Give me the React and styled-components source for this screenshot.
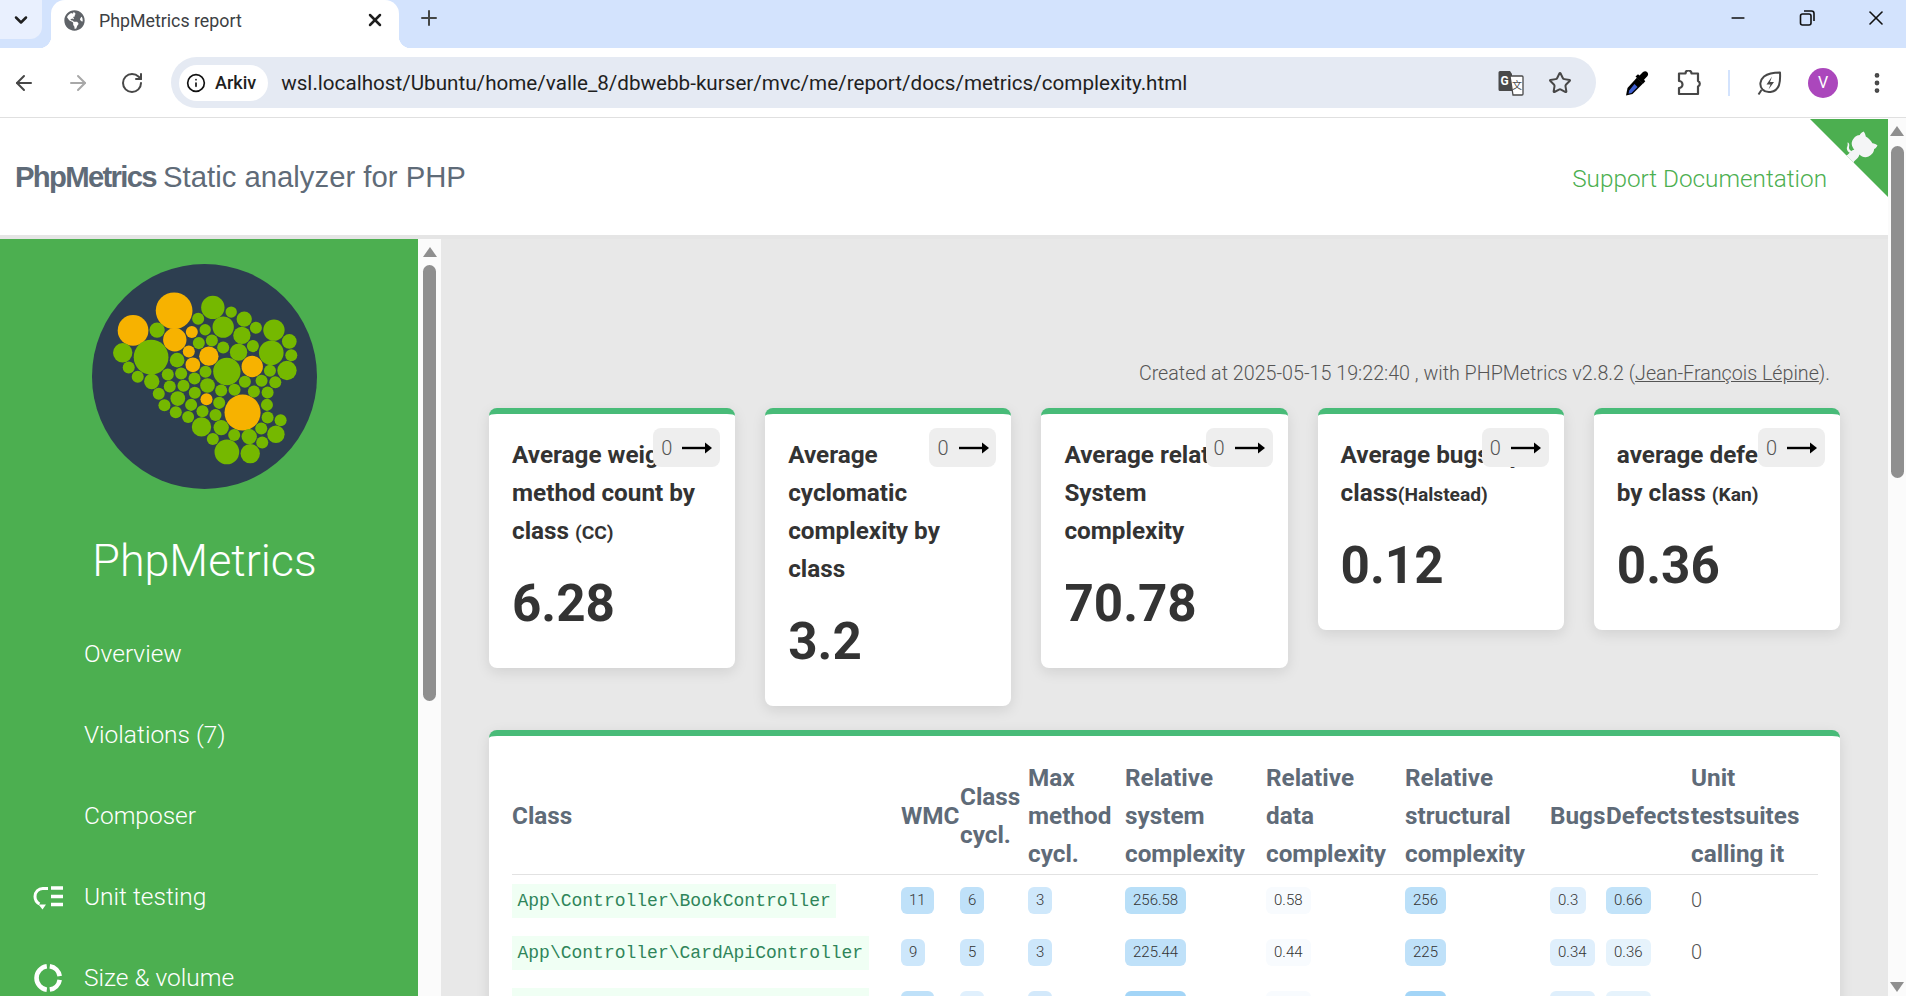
import React from 'react'
import styled, { createGlobalStyle } from 'styled-components'
import { ArrowLeft, ArrowRight, RotateCw, Info, Star, X, Plus, ChevronDown, Minus, MoreVertical } from 'lucide-react'
import { FaGlobeAmericas } from 'react-icons/fa'

const GlobalStyle = createGlobalStyle`
  html, body {
    margin: 0;
    height: 100%;
    overflow: hidden;
    font-family: Roboto, "Open Sans", sans-serif;
    background: #fff;
  }
`;

const Frame = styled.div`
  height: 100vh;
  display: flex;
  flex-direction: column;
  overflow: hidden;
`;

/* browser chrome */
const TabStrip = styled.div`
  height: 48px;
  flex: none;
  background: #d3e3fd;
  display: flex;
  align-items: flex-start;
`;

const TabMenu = styled.div`
  width: 42px;
  height: 39px;
  background: #e9f0fe;
  border-radius: 0 0 12px 0;
  display: flex;
  align-items: center;
  justify-content: center;
  color: #1f1f1f;
`;

const Tab = styled.div`
  position: relative;
  width: 348px;
  height: 48px;
  margin-left: 9px;
  background: #fff;
  border-radius: 14px 14px 0 0;
  display: flex;
  align-items: center;
  padding: 0 14px 8px 13px;
  box-sizing: border-box;
  color: #5f6368;
  &::before, &::after {
    content: '';
    position: absolute;
    bottom: 0;
    width: 12px;
    height: 12px;
  }
  &::before {
    left: -12px;
    background: radial-gradient(circle at 0 0, transparent 12px, #fff 12.5px);
  }
  &::after {
    right: -12px;
    background: radial-gradient(circle at 100% 0, transparent 12px, #fff 12.5px);
  }
`;

const TabTitle = styled.span`
  flex: 1;
  margin-left: 14px;
  font-size: 17.8px;
  color: #3c4043;
`;

const NewTab = styled.div`
  margin: 6px 0 0 18px;
  height: 24px;
  color: #444746;
`;

const WindowControls = styled.div`
  margin-left: auto;
  padding-right: 10px;
  display: flex;
  gap: 29px;
`;

const WindowButton = styled.div`
  width: 40px;
  height: 36px;
  display: flex;
  align-items: center;
  justify-content: center;
  color: #111;
`;

const Toolbar = styled.div`
  height: 69px;
  flex: none;
  background: #fff;
  border-bottom: 1px solid #e0e0e0;
  border-radius: 0 10px 0 0;
  display: flex;
  align-items: center;
  padding-left: 12px;
  box-sizing: content-box;
`;

const NavButton = styled.div`
  width: 24px;
  height: 24px;
  margin-right: 30px;
  color: ${({ $off }) => ($off ? '#a8a8a8' : '#474747')};
`;

const Omnibox = styled.div`
  width: 1425px;
  height: 51px;
  margin-left: -3px;
  flex: none;
  box-sizing: border-box;
  background: #e5eaf3;
  border-radius: 26px;
  display: flex;
  align-items: center;
  padding: 0 24px 0 8px;
`;

const SiteChip = styled.div`
  height: 36px;
  border-radius: 18px;
  background: #fff;
  display: flex;
  align-items: center;
  gap: 9px;
  padding: 0 12px 0 7px;
  font-size: 18px;
  font-weight: 500;
  color: #1f1f1f;
`;

const Url = styled.div`
  flex: 1;
  margin-left: 13px;
  font-size: 20.65px;
  color: #1f1f1f;
  white-space: nowrap;
`;

const OmniIcons = styled.div`
  display: flex;
  align-items: center;
  gap: 24px;
  color: #474747;
`;

const Extensions = styled.div`
  margin-left: 28px;
  display: flex;
  align-items: center;
  gap: 26px;
  color: #474747;
`;

const ToolDivider = styled.div`
  width: 2px;
  height: 26px;
  background: #d3e3fd;
`;

const Avatar = styled.div`
  width: 30px;
  height: 30px;
  border-radius: 50%;
  background: #ab47bc;
  color: #fff;
  font-size: 16px;
  display: flex;
  align-items: center;
  justify-content: center;
`;

/* page */
const Viewport = styled.div`
  flex: 1;
  min-height: 0;
  display: flex;
`;

const PageColumn = styled.div`
  position: relative;
  flex: 1;
  min-width: 0;
  display: flex;
  flex-direction: column;
`;

const Header = styled.header`
  height: 117px;
  flex: none;
  background: #fff;
  border-bottom: 4px solid #e5e5e5;
  display: flex;
  align-items: center;
  justify-content: space-between;
  padding: 0 61px 0 15px;
`;

const Brand = styled.div`
  font-family: "Liberation Sans", Arial, sans-serif;
  font-size: 29.3px;
  color: #5f6b78;
  strong {
    letter-spacing: -1.7px;
    margin-right: -1px;
  }
`;

const HeaderLinks = styled.div`
  font-size: 24.3px;
  font-weight: 300;
  color: #4caf50;
  padding-top: 3px;
`;

const Corner = styled.svg`
  position: absolute;
  top: 1px;
  right: 0;
  width: 78px;
  height: 78px;
`;

const Body = styled.div`
  flex: 1;
  min-height: 0;
  display: flex;
`;

const Sidebar = styled.aside`
  width: 418px;
  flex: none;
  background: #4caf50;
  color: #fff;
  overflow: hidden;
  padding-top: 25px;
  box-sizing: border-box;
`;

const Logo = styled.svg`
  display: block;
  width: 225px;
  height: 225px;
  margin: 0 0 0 92px;
`;

const SideTitle = styled.div`
  width: 409px;
  margin-top: 33px;
  text-align: center;
  font-size: 44.8px;
  font-weight: 300;
  line-height: 77px;
`;

const Nav = styled.nav`
  margin-top: 14px;
`;

const NavItem = styled.div`
  height: 81px;
  display: flex;
  align-items: center;
  gap: 21px;
  padding-left: 33px;
  font-size: 24.5px;
  font-weight: 300;
`;

const NavIcon = styled.span`
  width: 30px;
  height: 30px;
  display: block;
  flex: none;
`;

const ScrollTrack = styled.div`
  width: ${({ $w }) => $w}px;
  flex: none;
  background: #fbfbfb;
  display: flex;
  flex-direction: column;
  align-items: center;
  position: relative;
`;

const ScrollUp = styled.div`
  margin-top: ${({ $top }) => $top}px;
  width: 0;
  height: 0;
  border-left: 7px solid transparent;
  border-right: 7px solid transparent;
  border-bottom: 10px solid #8f8f8f;
`;

const ScrollThumb = styled.div`
  width: ${({ $w }) => $w}px;
  height: ${({ $h }) => $h}px;
  margin-top: ${({ $gap }) => $gap}px;
  background: #8f8f8f;
  border-radius: 7px;
`;

const ScrollDown = styled.div`
  margin-top: auto;
  margin-bottom: 4px;
  width: 0;
  height: 0;
  border-left: 7px solid transparent;
  border-right: 7px solid transparent;
  border-top: 10px solid #8f8f8f;
`;

const Main = styled.main`
  flex: 1;
  min-width: 0;
  background: #e8e8e8;
  padding: 120px 48px 0;
  overflow: hidden;
  box-sizing: border-box;
`;

const Created = styled.div`
  height: 30px;
  line-height: 30px;
  margin-bottom: 19px;
  padding-right: 10px;
  text-align: right;
  font-size: 19.7px;
  font-weight: 300;
  color: #555;
  a {
    color: #555;
    text-decoration: underline;
  }
`;

const CardRow = styled.div`
  display: flex;
  align-items: flex-start;
  gap: 30px;
`;

const Card = styled.div`
  position: relative;
  flex: 1;
  min-width: 0;
  box-sizing: border-box;
  background: #fff;
  border-top: 6px solid #48bb78;
  border-radius: 8px;
  padding: 22px 23px 26px;
  box-shadow: 0 4px 14px rgba(0, 0, 0, 0.1);
`;

const CardTitle = styled.div`
  font-size: 24.3px;
  line-height: 38px;
  font-weight: 700;
  color: #333;
  small {
    font-size: 19.2px;
    font-weight: 700;
    line-height: 0;
  }
`;

const CardValue = styled.div`
  margin-top: 15px;
  font-size: 51.2px;
  line-height: 77px;
  font-weight: 700;
  color: #333;
`;

const Trend = styled.div`
  position: absolute;
  top: 14px;
  right: 15px;
  width: 67px;
  height: 39px;
  box-sizing: border-box;
  background: #eee;
  border-radius: 8px;
  display: flex;
  align-items: center;
  gap: 10px;
  padding: 0 0 0 8px;
  font-size: 20px;
  font-weight: 300;
  color: #555;
`;

const TableCard = styled.div`
  margin-top: 24px;
  background: #fff;
  border-top: 6px solid #48bb78;
  border-radius: 8px;
  padding: 22px 22px 22px 23px;
  box-shadow: 0 4px 14px rgba(0, 0, 0, 0.1);
`;

const Table = styled.table`
  width: 100%;
  table-layout: fixed;
  border-collapse: collapse;
`;

const Col = styled.col`
  width: ${({ $w }) => $w}px;
`;

const Th = styled.th`
  padding: 0;
  font-size: 24.3px;
  line-height: 38px;
  font-weight: 700;
  color: #5f6b78;
  text-align: left;
  vertical-align: middle;
  border-bottom: 1px solid #e2e2e2;
  height: 116px;
  white-space: pre-line;
`;

const Td = styled.td`
  padding: 0;
  height: 52px;
  vertical-align: middle;
`;

const ClassName = styled.code`
  display: inline-block;
  vertical-align: middle;
  font-family: "Liberation Mono", monospace;
  font-size: 18px;
  line-height: 34px;
  padding: 0 5.5px;
  color: #2f855a;
  background: #f0fff4;
`;

const Metric = styled.span`
  display: inline-block;
  vertical-align: middle;
  height: 27px;
  line-height: 27px;
  margin-bottom: 2px;
  padding: 0 8px;
  border-radius: 6px;
  font-size: 15px;
  font-weight: 300;
  color: #333;
  background: ${({ $bg }) => $bg};
`;

const Plain = styled.span`
  display: inline-block;
  vertical-align: middle;
  line-height: 26px;
  margin-bottom: 2px;
  font-size: 20px;
  font-weight: 300;
  color: #555;
`;

const orange = [
  [343, 213, 55], [220, 272, 46], [345, 300, 35], [396, 277, 18], [387, 335, 18],
  [447, 349, 29], [399, 375, 22], [577, 380, 32], [440, 478, 18], [548, 518, 54],
];

const green = [
  [459, 203, 35], [514, 217, 17], [415, 237, 18], [553, 238, 23], [588, 264, 18], [642, 271, 32],
  [292, 271, 23], [436, 270, 17], [490, 262, 32], [546, 287, 26], [688, 305, 22], [417, 310, 18],
  [456, 302, 18], [490, 323, 18], [536, 337, 26], [579, 319, 18], [634, 339, 37], [694, 346, 18],
  [189, 339, 29], [274, 352, 52], [352, 361, 22], [207, 383, 18], [234, 411, 18], [276, 425, 23],
  [324, 404, 18], [364, 401, 18], [404, 416, 18], [437, 396, 18], [501, 395, 41], [681, 392, 29],
  [630, 393, 18], [555, 426, 18], [605, 423, 18], [646, 427, 18], [330, 440, 18], [371, 438, 18],
  [443, 437, 22], [484, 452, 18], [524, 450, 18], [582, 455, 18], [623, 458, 18], [297, 462, 18],
  [405, 459, 18], [354, 476, 22], [478, 489, 18], [314, 496, 18], [394, 495, 18], [621, 495, 18],
  [348, 517, 18], [428, 514, 18], [467, 525, 18], [385, 531, 18], [623, 533, 18], [662, 541, 18],
  [425, 561, 29], [484, 563, 23], [604, 566, 18], [523, 585, 18], [568, 590, 23], [648, 583, 26],
  [459, 597, 18], [607, 608, 18], [501, 636, 37], [571, 641, 29],
];

const cards = [
  { title: <>Average weighted method count by class <small>(CC)</small></>, value: '6.28' },
  { title: 'Average cyclomatic complexity by class', value: '3.2' },
  { title: 'Average relative System complexity', value: '70.78' },
  { title: <>Average bugs by class<small>(Halstead)</small></>, value: '0.12' },
  { title: <>average defects by class <small>(Kan)</small></>, value: '0.36' },
];

const columns = [
  ['Class', 389], ['WMC', 59], ['Class\ncycl.', 68], ['Max\nmethod\ncycl.', 97],
  ['Relative\nsystem\ncomplexity', 141], ['Relative\ndata\ncomplexity', 139],
  ['Relative\nstructural\ncomplexity', 145], ['Bugs', 56], ['Defects', 85],
  ['Unit\ntestsuites\ncalling it', 127],
];

const rows = [
  {
    name: 'App\\Controller\\BookController',
    metrics: [['11', '#bfe1f9'], ['6', '#bfe1f9'], ['3', '#cfe8fb'], ['256.58', '#b8dff8'], ['0.58', '#f8fbfe'], ['256', '#bbe0f9'], ['0.3', '#dfeffc'], ['0.66', '#c2e3f9']],
  },
  {
    name: 'App\\Controller\\CardApiController',
    metrics: [['9', '#cde7fb'], ['5', '#cde7fb'], ['3', '#cde7fb'], ['225.44', '#bfe1f9'], ['0.44', '#f8fbfe'], ['225', '#bfe1f9'], ['0.34', '#dfeffc'], ['0.36', '#e6f3fc']],
  },
  {
    name: 'App\\Controller\\GameApiController',
    metrics: [['11', '#bfe1f9'], ['4', '#e0f0fd'], ['3', '#d3e9fb'], ['361.11', '#a3d5f7'], ['0.11', '#f8fbfe'], ['361', '#a3d5f7'], ['0.31', '#dfeffc'], ['0.36', '#e6f3fc']],
  },
];

const TestingIcon = () => (
  <svg viewBox="0 0 30 30" width="30" height="30" fill="none" stroke="#fff">
    <path d="M15 6.500H10A7.800 7.800 0 0 0 2 14.500c0 3.300 1.800 6 4.500 7.500" strokeWidth="3" />
    <path d="M5.500 22.500h7.500l-3.500 5z" fill="#fff" stroke="none" />
    <path d="M18 6h12M18 14.500h12M18 22.500h12" strokeWidth="3.400" />
  </svg>
);

const VolumeIcon = () => (
  <svg viewBox="0 0 30 30" width="30" height="30" fill="none" stroke="#fff" strokeWidth="4.600">
    <path d="M13.800 3.300A11.800 11.800 0 0 0 13.800 26.700" />
    <path d="M16.800 26.600a11.800 11.800 0 0 0 9.900-9.800" />
    <path d="M26.700 13.200a11.800 11.800 0 0 0-9.900-9.900" />
  </svg>
);

const RestoreIcon = () => (
  <svg viewBox="0 0 18 18" width="18" height="18" fill="none" stroke="#111" strokeWidth="1.6">
    <rect x="2.5" y="5" width="10.5" height="11" rx="2" />
    <path d="M6 2h7.5a2.5 2.5 0 0 1 2.5 2.5V12" />
  </svg>
);

const TranslateIcon = () => (
  <svg viewBox="0 0 26 26" width="26" height="26">
    <path d="M2 1h10l2 3v17H2a1.500 1.500 0 0 1-1.500-1.500V2.500A1.500 1.500 0 0 1 2 1z" fill="#4a4a4a" />
    <path d="M12 6h12a1 1 0 0 1 1 1v17a1 1 0 0 1-1 1H15z" fill="#fff" stroke="#4a4a4a" strokeWidth="1.3" />
    <text x="2.500" y="15" fontSize="12" fontWeight="700" fill="#fff" fontFamily="Roboto, sans-serif">G</text>
    <text x="14" y="19" fontSize="10" fill="#4a4a4a" fontFamily="'Noto Sans CJK SC', sans-serif">文</text>
  </svg>
);

const DropperIcon = () => (
  <svg viewBox="0 0 26 26" width="26" height="26">
    <path d="M13 7.500l6 6L8.500 24l-6.500 1.500L3.500 18z" fill="#000" />
    <path d="M10.500 14l3 3-6 6-3 .8.700-3.200z" fill="#3f5fd0" />
    <path d="M11.500 6.500l2.500-2.200 1.500 1.300L19 2c1.500-1.200 3.200-1 4.300.2 1.100 1.200 1.100 2.800 0 4L20 9.800l1.300 1.500-2.300 2.400z" fill="#000" />
  </svg>
);

const PuzzleIcon = () => (
  <svg viewBox="0 0 26 26" width="26" height="26" fill="none" stroke="#474747" strokeWidth="2.200">
    <path d="M3 3.500h6.500a3 3 0 0 1 6 0H22v7.500a3 3 0 0 1 0 5.500V24H3v-6a3.500 3.500 0 0 0 0-7z" strokeLinejoin="round" />
  </svg>
);

const LeafIcon = () => (
  <svg viewBox="0 0 26 26" width="26" height="26" fill="none" stroke="#474747" strokeWidth="2">
    <path d="M24 2.500c.5 9 0 18-9.500 19.500-3 .4-6-.4-8-2.500C3 15.500 4 10 8 6.500 12 3.500 18 2.500 24 2.500z" strokeLinejoin="round" />
    <path d="M5.500 20L2.500 24.500" />
    <path d="M16 6.500l-5.500 8h4l-2 5 5.500-7.500h-4z" fill="#474747" stroke="none" />
  </svg>
);

const TrendArrow = () => (
  <svg viewBox="0 0 30 12" width="30" height="12">
    <path d="M0 4.800h24v2.400H0z" fill="#000" />
    <path d="M23 .5L30 6l-7 5.500z" fill="#000" />
  </svg>
);

const App = () => {
  return (
    <Frame>
      <GlobalStyle />
      <TabStrip>
        <TabMenu><ChevronDown size={20} strokeWidth={3} /></TabMenu>
        <Tab>
          <FaGlobeAmericas size={21} />
          <TabTitle>PhpMetrics report</TabTitle>
          <X size={20} strokeWidth={3} color="#1f1f1f" />
        </Tab>
        <NewTab><Plus size={24} strokeWidth={2} /></NewTab>
        <WindowControls>
          <WindowButton><Minus size={20} strokeWidth={2} /></WindowButton>
          <WindowButton><RestoreIcon /></WindowButton>
          <WindowButton><X size={24} strokeWidth={1.6} /></WindowButton>
        </WindowControls>
      </TabStrip>

      <Toolbar>
        <NavButton><ArrowLeft size={24} strokeWidth={2} /></NavButton>
        <NavButton $off><ArrowRight size={24} strokeWidth={2} /></NavButton>
        <NavButton><RotateCw size={24} strokeWidth={2} /></NavButton>
        <Omnibox>
          <SiteChip><Info size={20} strokeWidth={2} color="#111" />Arkiv</SiteChip>
          <Url>wsl.localhost/Ubuntu/home/valle_8/dbwebb-kurser/mvc/me/report/docs/metrics/complexity.html</Url>
          <OmniIcons>
            <TranslateIcon />
            <Star size={24} strokeWidth={2} />
          </OmniIcons>
        </Omnibox>
        <Extensions>
          <DropperIcon />
          <PuzzleIcon />
          <ToolDivider />
          <LeafIcon />
          <Avatar>V</Avatar>
          <MoreVertical size={26} strokeWidth={2.4} />
        </Extensions>
      </Toolbar>

      <Viewport>
        <PageColumn>
          <Header>
            <Brand><strong>PhpMetrics</strong> Static analyzer for PHP</Brand>
            <HeaderLinks>Support Documentation</HeaderLinks>
          </Header>
          <Corner viewBox="0 0 250 250">
            <path d="M0,0 L250,250 L250,0 Z" fill="#4caf50" />
            <path d="M128.3,109.0 C113.8,99.7 119.0,89.6 119.0,89.6 C122.0,82.7 120.5,78.6 120.5,78.6 C119.2,72.0 123.4,76.3 123.4,76.3 C127.3,80.9 125.5,87.3 125.5,87.3 C122.9,97.6 130.6,101.9 134.4,103.2" fill="#f4f5f6" />
            <path d="M115.0,115.0 C114.9,115.1 118.7,116.5 119.8,115.4 L133.7,101.6 C136.9,99.2 139.9,98.4 142.2,98.6 C133.8,88.0 127.5,74.4 143.8,58.0 C148.5,53.4 154.0,51.2 159.7,51.0 C160.3,49.4 163.2,43.6 171.4,40.1 C171.4,40.1 176.1,42.5 178.8,56.2 C183.1,58.6 187.2,61.8 190.9,65.4 C194.5,69.0 197.7,73.2 200.1,77.6 C213.8,80.2 216.3,84.9 216.3,84.9 C212.7,93.1 206.9,96.0 205.4,96.6 C205.1,102.4 203.0,107.8 198.3,112.5 C181.9,128.9 168.3,122.5 157.7,114.1 C157.9,116.9 156.7,120.9 152.7,124.9 L141.0,136.5 C139.8,137.7 141.6,141.9 141.8,141.8 Z" fill="#f4f5f6" />
          </Corner>

          <Body>
            <Sidebar>
              <Logo viewBox="97 73 674 674">
                <circle cx="434" cy="410" r="337" fill="#2d3e50" />
                {orange.map(([x, y, r]) => <circle key={`o${x}-${y}`} cx={x} cy={y} r={r} fill="#f7b200" />)}
                {green.map(([x, y, r]) => <circle key={`g${x}-${y}`} cx={x} cy={y} r={r} fill="#75b800" />)}
              </Logo>
              <SideTitle>PhpMetrics</SideTitle>
              <Nav>
                <NavItem><NavIcon />Overview</NavItem>
                <NavItem><NavIcon />Violations (7)</NavItem>
                <NavItem><NavIcon />Composer</NavItem>
                <NavItem><NavIcon><TestingIcon /></NavIcon>Unit testing</NavItem>
                <NavItem><NavIcon><VolumeIcon /></NavIcon>Size &amp; volume</NavItem>
              </Nav>
            </Sidebar>
            <ScrollTrack $w={23}>
              <ScrollUp $top={8} />
              <ScrollThumb $w={13} $h={436} $gap={8} />
            </ScrollTrack>

            <Main>
              <Created>
                Created at 2025-05-15 19:22:40 , with PHPMetrics v2.8.2 (<a href="#author">Jean-François Lépine</a>).
              </Created>
              <CardRow>
                {cards.map((card) => (
                  <Card key={card.value}>
                    <CardTitle>{card.title}</CardTitle>
                    <CardValue>{card.value}</CardValue>
                    <Trend>0 <TrendArrow /></Trend>
                  </Card>
                ))}
              </CardRow>
              <TableCard>
                <Table>
                  <colgroup>
                    {columns.map(([label, w]) => <Col key={label} $w={w} />)}
                  </colgroup>
                  <thead>
                    <tr>
                      {columns.map(([label]) => <Th key={label}>{label}</Th>)}
                    </tr>
                  </thead>
                  <tbody>
                    {rows.map((row) => (
                      <tr key={row.name}>
                        <Td><ClassName>{row.name}</ClassName></Td>
                        {row.metrics.map(([value, bg], i) => (
                          <Td key={i}><Metric $bg={bg}>{value}</Metric></Td>
                        ))}
                        <Td><Plain>0</Plain></Td>
                      </tr>
                    ))}
                  </tbody>
                </Table>
              </TableCard>
            </Main>
          </Body>
        </PageColumn>
        <ScrollTrack $w={18}>
          <ScrollUp $top={8} />
          <ScrollThumb $w={13} $h={332} $gap={10} />
          <ScrollDown />
        </ScrollTrack>
      </Viewport>
    </Frame>
  );
}

export default App;
